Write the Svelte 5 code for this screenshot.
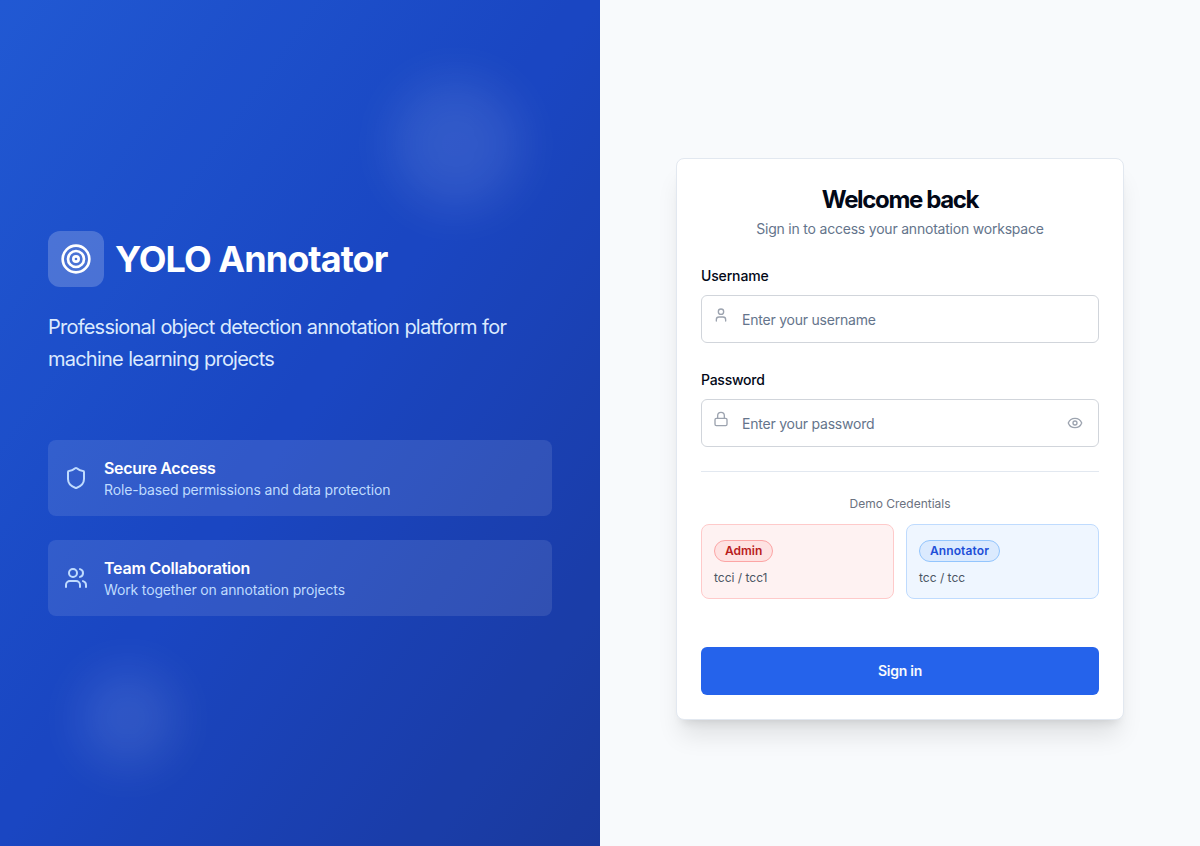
<script>
  const features = [
    { icon: 'shield', title: 'Secure Access', text: 'Role-based permissions and data protection' },
    { icon: 'users', title: 'Team Collaboration', text: 'Work together on annotation projects' }
  ];
  const accounts = [
    { role: 'Admin', login: 'tcci / tcc1', tone: 'red' },
    { role: 'Annotator', login: 'tcc / tcc', tone: 'blue' }
  ];
  let username = $state('');
  let password = $state('');
  let visible = $state(false);
</script>

<div class="page">
  <section class="hero">
    <div class="shade"></div>
    <div class="blob top"></div>
    <div class="blob bottom"></div>
    <div class="intro">
      <div class="brand">
        <div class="logo">
          <svg width="32" height="32" viewBox="0 0 24 24"><circle cx="12" cy="12" r="10" /><circle cx="12" cy="12" r="6" /><circle cx="12" cy="12" r="2" /></svg>
        </div>
        <h1>YOLO Annotator</h1>
      </div>
      <p class="lead">Professional object detection annotation platform for machine learning projects</p>
      <div class="features">
        {#each features as f}
          <div class="feature">
            <svg width="24" height="24" viewBox="0 0 24 24">
              {#if f.icon === 'shield'}
                <path d="M20 13c0 5-3.5 7.5-7.66 8.95a1 1 0 0 1-.67-.01C7.5 20.5 4 18 4 13V6a1 1 0 0 1 1-1c2 0 4.5-1.2 6.24-2.72a1.17 1.17 0 0 1 1.52 0C14.51 3.81 17 5 19 5a1 1 0 0 1 1 1z" />
              {:else}
                <path d="M16 21v-2a4 4 0 0 0-4-4H6a4 4 0 0 0-4 4v2" /><circle cx="9" cy="7" r="4" /><path d="M22 21v-2a4 4 0 0 0-3-3.87" /><path d="M16 3.13a4 4 0 0 1 0 7.75" />
              {/if}
            </svg>
            <div>
              <h3>{f.title}</h3>
              <p>{f.text}</p>
            </div>
          </div>
        {/each}
      </div>
    </div>
  </section>

  <main>
    <form class="card" onsubmit={(e) => e.preventDefault()}>
      <header>
        <h2>Welcome back</h2>
        <p>Sign in to access your annotation workspace</p>
      </header>

      <div class="field">
        <label for="username">Username</label>
        <div class="control">
          <svg class="lead-icon" width="16" height="16" viewBox="0 0 24 24"><path d="M19 21v-2a4 4 0 0 0-4-4H9a4 4 0 0 0-4 4v2" /><circle cx="12" cy="7" r="4" /></svg>
          <input id="username" type="text" placeholder="Enter your username" bind:value={username} />
        </div>
      </div>

      <div class="field">
        <label for="password">Password</label>
        <div class="control">
          <svg class="lead-icon" width="16" height="16" viewBox="0 0 24 24"><rect width="18" height="11" x="3" y="11" rx="2" /><path d="M7 11V7a5 5 0 0 1 10 0v4" /></svg>
          <input id="password" type={visible ? 'text' : 'password'} placeholder="Enter your password" bind:value={password} />
          <button class="eye" type="button" aria-label="Show password" onclick={() => (visible = !visible)}>
            <svg width="16" height="16" viewBox="0 0 24 24"><path d="M2.06 12.35a1 1 0 0 1 0-.7 10.75 10.75 0 0 1 19.88 0 1 1 0 0 1 0 .7 10.75 10.75 0 0 1-19.88 0" /><circle cx="12" cy="12" r="3" /></svg>
          </button>
        </div>
      </div>

      <div class="demo">
        <p class="caption">Demo Credentials</p>
        <div class="accounts">
          {#each accounts as a}
            <div class="account {a.tone}">
              <span class="badge">{a.role}</span>
              <p>{a.login}</p>
            </div>
          {/each}
        </div>
      </div>

      <button class="submit" type="submit">Sign in</button>
    </form>
  </main>
</div>

<style>
  :global(body) { margin: 0; }
  .page, .page * { box-sizing: border-box; }
  .page {
    display: grid;
    grid-template-columns: 1fr 1fr;
    height: 100vh;
    font-family: Inter, 'Liberation Sans', sans-serif;
    font-size: 16px;
    line-height: 24px;
    color: #020817;
    background: #f8fafc;
  }
  h1, h2, h3, p { margin: 0; }
  svg { display: block; fill: none; stroke: currentColor; stroke-width: 2; stroke-linecap: round; stroke-linejoin: round; flex: none; }

  .hero {
    position: relative;
    overflow: hidden;
    display: flex;
    flex-direction: column;
    justify-content: center;
    padding: 0 48px;
    color: #fff;
    background: linear-gradient(to bottom right, #2563eb, #1d4ed8, #1e40af);
  }
  .shade { position: absolute; inset: 0; background: rgba(0, 0, 0, 0.1); }
  .blob { position: absolute; border-radius: 50%; background: rgba(255, 255, 255, 0.1); filter: blur(24px); }
  .blob.top { top: 80px; right: 80px; width: 128px; height: 128px; }
  .blob.bottom { bottom: 80px; left: 80px; width: 96px; height: 96px; }
  .intro { position: relative; }
  .brand { display: flex; align-items: center; gap: 12px; margin-bottom: 24px; }
  .logo { padding: 12px; border-radius: 12px; background: rgba(255, 255, 255, 0.2); }
  h1 { font-size: 36px; line-height: 40px; font-weight: 700; letter-spacing: -0.95px; text-indent: -1px; }
  .lead { font-size: 20px; line-height: 32px; letter-spacing: -0.77px; word-spacing: 0.5px; color: #dbeafe; margin-bottom: 65px; }
  .features { display: flex; flex-direction: column; gap: 24px; }
  .feature { display: flex; align-items: center; gap: 16px; padding: 16px; border-radius: 8px; background: rgba(255, 255, 255, 0.1); }
  .feature svg { color: #bfdbfe; }
  h3 { font-size: 16px; line-height: 24px; font-weight: 600; letter-spacing: -0.22px; }
  .feature:first-child h3 { letter-spacing: -0.32px; }
  .feature p { font-size: 14px; line-height: 20px; letter-spacing: -0.15px; color: #bfdbfe; }

  main { display: flex; align-items: center; justify-content: center; padding: 32px 32px 0; }
  .card {
    width: 448px;
    padding: 24px;
    border: 1px solid #e2e8f0;
    border-radius: 8px;
    background: #fff;
    box-shadow: 0 20px 25px -5px rgba(0, 0, 0, 0.1), 0 8px 10px -6px rgba(0, 0, 0, 0.1);
  }
  header { text-align: center; margin-bottom: 24px; }
  h2 { padding-top: 1px; font-size: 24px; line-height: 32px; font-weight: 700; letter-spacing: -1.35px; }
  header p { margin-top: 3px; font-size: 14px; line-height: 20px; letter-spacing: -0.21px; color: #64748b; }
  .field { margin-bottom: 24px; }
  label { display: block; height: 24px; margin-bottom: 8px; font-size: 14px; line-height: 26px; font-weight: 500; letter-spacing: -0.15px; }
  label[for='password'] { letter-spacing: -0.25px; }
  .control { position: relative; height: 48px; }
  input {
    width: 100%;
    height: 48px;
    padding: 8px 40px;
    border: 1px solid #d1d5db;
    border-radius: 6px;
    background: #fff;
    color: inherit;
    font: 400 14px/20px Inter, 'Liberation Sans', sans-serif;
    letter-spacing: -0.22px;
    outline: none;
  }
  input::placeholder { color: #64748b; opacity: 1; }
  .lead-icon { position: absolute; left: 12px; top: 12px; color: #9ca3af; }
  .eye { position: absolute; right: 16px; top: 16px; padding: 0; border: 0; background: none; color: #9ca3af; cursor: pointer; }
  .demo { padding-top: 24px; border-top: 1px solid #e2e8f0; }
  .caption { text-align: center; font-size: 12px; line-height: 16px; color: #6b7280; margin-bottom: 12px; }
  .accounts { display: grid; grid-template-columns: 1fr 1fr; gap: 12px; }
  .account { height: 75px; padding: 12px; border: 1px solid; border-radius: 8px; }
  .account p { margin-top: 8px; font-size: 12px; line-height: 16px; color: #4b5563; }
  .badge { display: inline-flex; padding: 2px 10px; border: 1px solid; border-radius: 999px; font-size: 12px; line-height: 16px; font-weight: 600; }
  .red { background: #fef2f2; border-color: #fecaca; }
  .blue { background: #eff6ff; border-color: #bfdbfe; }
  .red .badge { background: #fee2e2; border-color: #fca5a5; color: #b91c1c; }
  .blue .badge { background: #dbeafe; border-color: #93c5fd; color: #1d4ed8; letter-spacing: 0.1px; }
  .submit {
    display: block;
    width: 100%;
    height: 48px;
    margin-top: 48px;
    border: 0;
    border-radius: 6px;
    background: #2563eb;
    color: #f8fafc;
    font: 600 14px/20px Inter, 'Liberation Sans', sans-serif;
    letter-spacing: -0.25px;
    cursor: pointer;
  }
</style>
